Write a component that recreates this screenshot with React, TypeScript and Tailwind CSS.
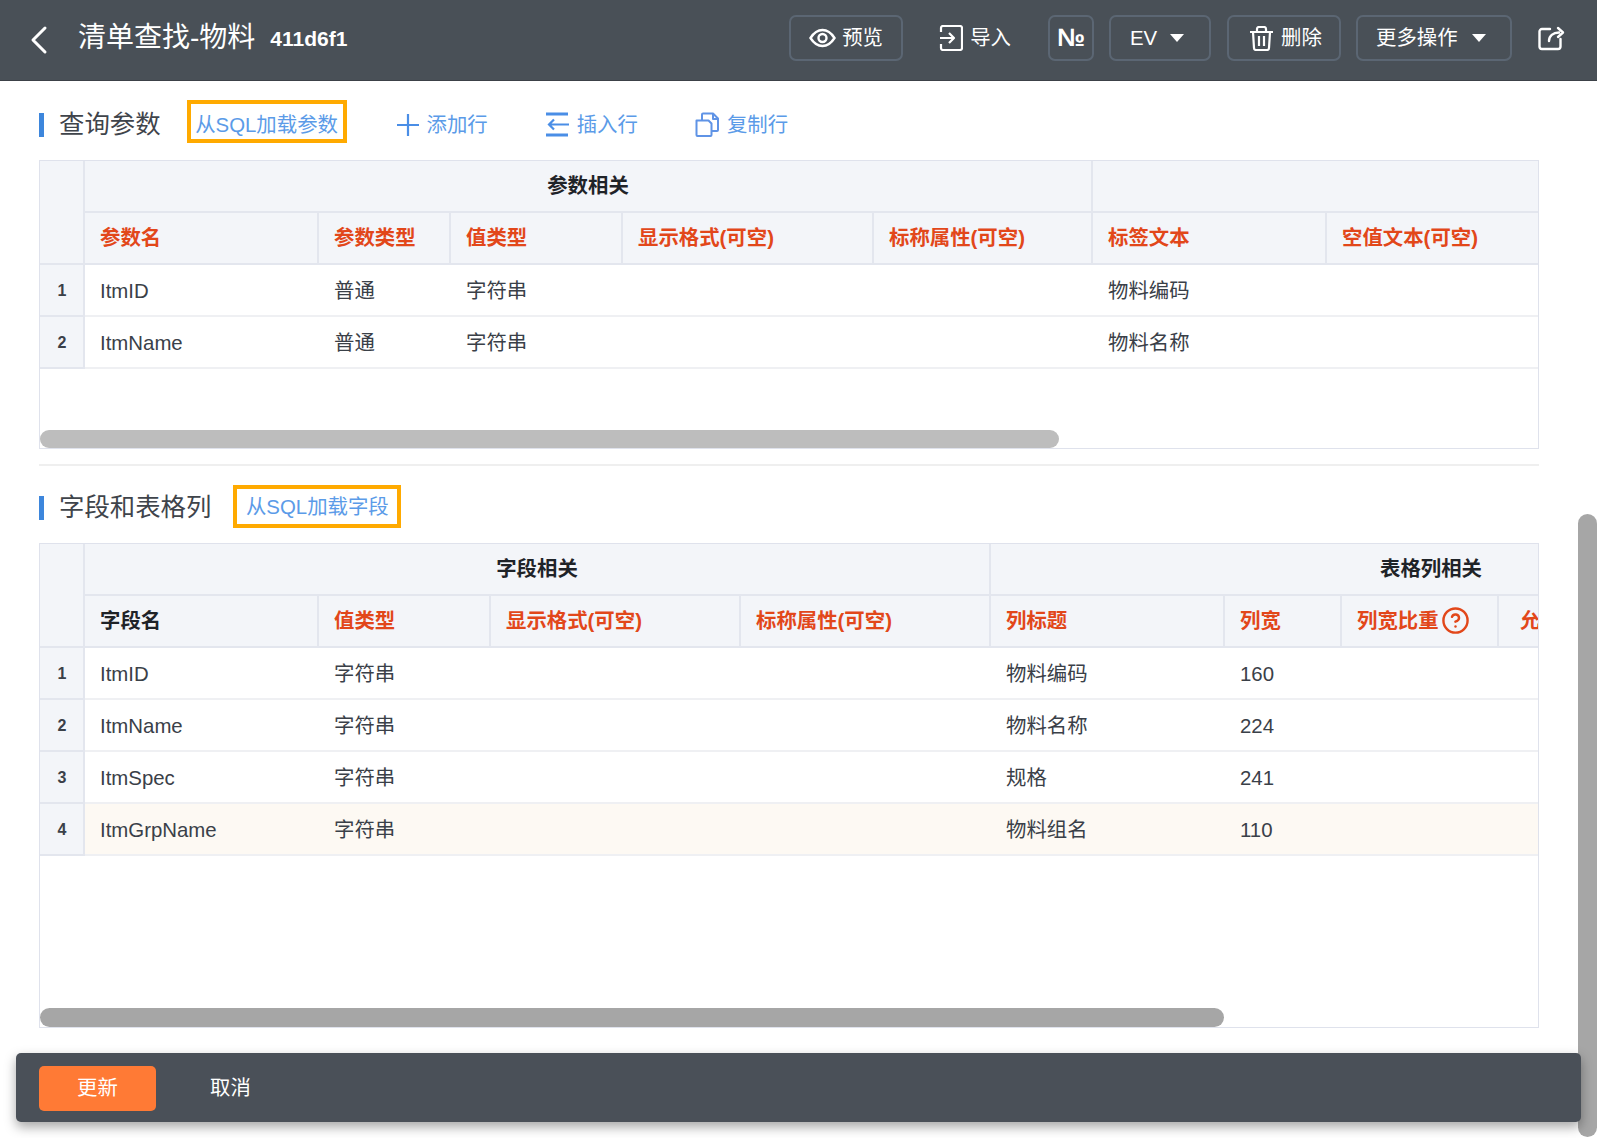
import React from "react";
import { CircleHelp } from "lucide-react";

const Back = () => (
  <svg width="18" height="30" viewBox="0 0 18 30" fill="none" stroke="#fff" strokeWidth="3" strokeLinecap="round" strokeLinejoin="round">
    <path d="M15 3 3 15l12 12" />
  </svg>
);
const EyeI = () => (
  <svg width="27" height="20" viewBox="0 0 27 20" fill="none" stroke="#fff" strokeWidth="2.4">
    <path d="M1.5 10C5 4.5 9 2 13.5 2s8.500 2.500 12 8c-3.500 5.500-7.500 8-12 8s-8.500-2.500-12-8Z" />
    <circle cx="13.500" cy="10" r="4" />
  </svg>
);
const ImportI = () => (
  <svg width="24" height="26" viewBox="0 0 24 26" fill="none" stroke="#fff" strokeWidth="2.200" strokeLinejoin="round">
    <path d="M2 7V3a2 2 0 0 1 2-2h17a2 2 0 0 1 2 2v20a2 2 0 0 1-2 2H4a2 2 0 0 1-2-2v-4" />
    <path d="M1 13h14M10 8l5 5-5 5" />
  </svg>
);
const TrashI = () => (
  <svg width="25" height="25" viewBox="0 0 25 25" fill="none" stroke="#fff" strokeWidth="2.200" strokeLinejoin="round">
    <path d="M1 6h23M8 5V3a2 2 0 0 1 2-2h5a2 2 0 0 1 2 2v2" />
    <path d="M4 6l1 16a2 2 0 0 0 2 2h11a2 2 0 0 0 2-2l1-16M10 10v10M15 10v10" />
  </svg>
);
const ShareI = () => (
  <svg width="27" height="25" viewBox="0 0 27 25" fill="none" stroke="#fff" strokeWidth="2.400" strokeLinecap="round" strokeLinejoin="round">
    <path d="M12 3H4a2.500 2.500 0 0 0-2.500 2.500v15A2.500 2.500 0 0 0 4 23h16a2.500 2.500 0 0 0 2.500-2.500V13" />
    <path d="M11 15c0-5 4-8.500 10-8.500M20 2l5 4.500-5 4.500" />
  </svg>
);
const PlusI = () => (
  <svg width="22" height="22" viewBox="0 0 22 22" fill="none" stroke="#4a8ee6" strokeWidth="2.200" className="mr-[1px]">
    <path d="M0 11h22M11 0v22" />
  </svg>
);
const InsertI = () => (
  <svg width="25" height="25" viewBox="0 0 25 25" fill="none" stroke="#4a8ee6" strokeWidth="2.200">
    <path d="M1 2h22M1 23h22" strokeWidth="2.800" />
    <path d="M4 12.500h20M9 7.500l-5 5 5 5" />
  </svg>
);
const CopyI = () => (
  <svg width="25" height="25" viewBox="0 0 25 25" fill="none" stroke="#5f93e6" strokeWidth="2" strokeLinejoin="round">
    <path d="M1.500 8.500h12l3 3v11.500a1 1 0 0 1-1 1h-13a1 1 0 0 1-1-1Z" />
    <path d="M7 8V2.500a1 1 0 0 1 1-1h10l5 5V18a1 1 0 0 1-1 1h-5" />
    <path d="M18 2v5h5" />
  </svg>
);
const Caret = () => <span className="w-0 h-0 border-x-[7px] border-x-transparent border-t-[8px] border-t-white" />;

const bordered = "flex items-center h-[46px] border-2 border-[#5b6673] rounded-[7px] text-white text-[20.4px]";

function Header() {
  return (
    <header className="flex items-center h-[81px] pb-[4px] bg-[#495057] border-b border-[#3c4148]">
      <div className="ml-[30px] flex mt-[4px]"><Back /></div>
      <h1 className="ml-[30px] text-[28px] text-white leading-none">清单查找-物料</h1>
      <span className="ml-[15px] text-[21px] text-white leading-none font-bold">411d6f1</span>
      <div className="ml-auto mr-[32px] flex items-center">
        <button className={`${bordered} w-[114px] pl-[18px] gap-[6px]`}><EyeI /><span>预览</span></button>
        <button className="ml-[36px] flex items-center gap-[7px] text-white text-[20.4px]"><ImportI /><span>导入</span></button>
        <button className={`${bordered} ml-[37px] w-[46px] justify-center font-bold text-[25px]`}>№</button>
        <button className={`${bordered} ml-[15px] w-[102px] pl-[19px]`}><span>EV</span><span className="ml-[13px] flex"><Caret /></span></button>
        <button className={`${bordered} ml-[16px] w-[114px] pl-[20px] gap-[7px]`}><TrashI /><span>删除</span></button>
        <button className={`${bordered} ml-[15px] w-[156px] pl-[18px]`}><span>更多操作</span><span className="ml-[14px] flex"><Caret /></span></button>
        <span className="ml-[26px] flex"><ShareI /></span>
      </div>
    </header>
  );
}

function SectionTitle({ title, load, box, row, children }: { title: string; load: string; box: string; row: string; children?: React.ReactNode }) {
  return (
    <div className={`${row} flex items-center h-[43px]`}>
      <span className="w-[5px] h-[24px] bg-[#3d86dc]" />
      <span className="ml-[15px] text-[25.400px] text-[#3f444b] leading-none">{title}</span>
      <span className={`${box} self-start h-[43px] border-4 border-[#ffaa00] flex items-center justify-center text-[20.4px] text-[#5b9be8] whitespace-nowrap`}>{load}</span>
      {children}
    </div>
  );
}

function Tool({ icon, label, cls }: { icon: React.ReactNode; label: string; cls: string }) {
  return (
    <span className={`${cls} flex items-center gap-[7px] text-[20.4px] text-[#5b9be8]`}>
      {icon}
      <span>{label}</span>
    </span>
  );
}

const red = "text-[#e2471a]";
const dark = "text-[#1f2328]";
const thBase = "h-[52px] bg-[#f3f5f9] border-r-2 border-b-2 border-[#e3e6ee] pl-[15px] text-left text-[20.4px] font-bold whitespace-nowrap overflow-hidden";
const tdBase = "h-[52px] border-b-2 border-[#eff0f3] px-[15px] pt-[2px] text-[20.4px] text-[#3a4048] whitespace-nowrap overflow-hidden";
const numCell = "bg-[#f3f5f9] border-r-2 border-b-2 border-[#e3e6ee] pt-[2px] pl-[1px] text-center text-[16px] font-bold text-[#3a4048]";
const groupTh = "h-[52px] bg-[#f3f5f9] border-r-2 border-b-2 border-[#e3e6ee] pt-[1px] text-center text-[20.4px] font-bold text-[#1f2328]";

function ParamTable() {
  const rows = [
    ["ItmID", "普通", "字符串", "物料编码"],
    ["ItmName", "普通", "字符串", "物料名称"],
  ];
  const heads = ["参数名", "参数类型", "值类型", "显示格式(可空)", "标称属性(可空)", "标签文本", "空值文本(可空)"];
  return (
    <div className="relative mt-[17px] h-[289px] border border-[#dfe2ec] overflow-hidden">
      <table className="table-fixed border-separate border-spacing-0 w-[1503px]">
        <colgroup>
          {[45, 234, 132, 172, 251, 219, 234, 216].map((w, i) => <col key={i} style={{ width: w }} />)}
        </colgroup>
        <thead>
          <tr>
            <th rowSpan={2} className={numCell} />
            <th colSpan={5} className={groupTh}>参数相关</th>
            <th colSpan={2} className={groupTh} />
          </tr>
          <tr>
            {heads.map((h) => (
              <th key={h} className={`${thBase} ${red}`}>{h}</th>
            ))}
          </tr>
        </thead>
        <tbody>
          {rows.map((r, i) => (
            <tr key={r[0]}>
              <td className={numCell}>{i + 1}</td>
              <td className={tdBase}>{r[0]}</td>
              <td className={tdBase}>{r[1]}</td>
              <td className={tdBase}>{r[2]}</td>
              <td className={tdBase} />
              <td className={tdBase} />
              <td className={tdBase}>{r[3]}</td>
              <td className={tdBase} />
            </tr>
          ))}
        </tbody>
      </table>
      <div className="absolute left-0 bottom-0 h-[18px] w-[1019px] rounded-full bg-[#bdbdbd]" />
    </div>
  );
}

function FieldTable() {
  const rows = [
    ["ItmID", "字符串", "物料编码", "160"],
    ["ItmName", "字符串", "物料名称", "224"],
    ["ItmSpec", "字符串", "规格", "241"],
    ["ItmGrpName", "字符串", "物料组名", "110"],
  ];
  return (
    <div className="relative mt-[15px] h-[485px] border border-[#dfe2ec] overflow-hidden">
      <table className="table-fixed border-separate border-spacing-0 w-[1833px]">
        <colgroup>
          {[45, 234, 172, 250, 250, 234, 117, 157, 374].map((w, i) => <col key={i} style={{ width: w }} />)}
        </colgroup>
        <thead>
          <tr>
            <th rowSpan={2} className={numCell} />
            <th colSpan={4} className={groupTh}>字段相关</th>
            <th colSpan={4} className={groupTh}>表格列相关</th>
          </tr>
          <tr>
            <th className={`${thBase} ${dark}`}>字段名</th>
            <th className={`${thBase} ${red}`}>值类型</th>
            <th className={`${thBase} ${red}`}>显示格式(可空)</th>
            <th className={`${thBase} ${red}`}>标称属性(可空)</th>
            <th className={`${thBase} ${red}`}>列标题</th>
            <th className={`${thBase} ${red}`}>列宽</th>
            <th className={`${thBase} ${red}`}>
              <span className="flex items-center gap-[2px]">列宽比重<CircleHelp size={29} strokeWidth={2} /></span>
            </th>
            <th className={`${thBase} ${red} pl-[21px]`}>允许</th>
          </tr>
        </thead>
        <tbody>
          {rows.map((r, i) => {
            const bg = i === 3 ? "bg-[#fdf9f3]" : "";
            return (
              <tr key={r[0]}>
                <td className={numCell}>{i + 1}</td>
                <td className={`${tdBase} ${bg}`}>{r[0]}</td>
                <td className={`${tdBase} ${bg}`}>{r[1]}</td>
                <td className={`${tdBase} ${bg}`} />
                <td className={`${tdBase} ${bg}`} />
                <td className={`${tdBase} ${bg}`}>{r[2]}</td>
                <td className={`${tdBase} ${bg}`}>{r[3]}</td>
                <td className={`${tdBase} ${bg}`} />
                <td className={`${tdBase} ${bg}`} />
              </tr>
            );
          })}
        </tbody>
      </table>
      <div className="absolute left-0 bottom-0 h-[19px] w-[1184px] rounded-full bg-[#a6a6a6]" />
    </div>
  );
}

export default function App() {
  return (
    <div className="relative w-[1597px] h-[1138px] overflow-hidden bg-white font-['Liberation_Sans','Noto_Sans_CJK_SC',sans-serif]">
      <Header />
      <main className="w-[1500px] ml-[39px]">
        <div className="pt-[19px]">
          <SectionTitle title="查询参数" load="从SQL加载参数" box="w-[160px] ml-[26px] -mt-[7px] pt-[7px]" row="pt-[7px]">
            <Tool cls="ml-[50px]" icon={<PlusI />} label="添加行" />
            <Tool cls="ml-[57px]" icon={<InsertI />} label="插入行" />
            <Tool cls="ml-[57px]" icon={<CopyI />} label="复制行" />
          </SectionTitle>
          <ParamTable />
        </div>
        <div className="mt-[15px] h-[2px] bg-[#efefef]" />
        <div className="pt-[19px]">
          <SectionTitle title="字段和表格列" load="从SQL加载字段" box="w-[168px] ml-[22px] -mt-[3px] pt-[2px]" row="pt-[3px]" />
          <FieldTable />
        </div>
      </main>
      <div className="absolute right-0 top-[514px] bottom-[1px] w-[19px] rounded-full bg-[#a6a6a6]" />
      <footer className="absolute left-[16px] top-[1053px] w-[1565px] h-[69px] rounded-[5px] bg-[#4a5058] shadow-[0_5px_12px_rgba(0,0,0,0.35)] flex items-center pl-[23px] pt-[1px]">
        <button className="w-[117px] h-[45px] rounded-[5px] bg-[#ff7a35] text-white text-[20.4px]">更新</button>
        <button className="ml-[54px] text-[20.4px] text-white">取消</button>
      </footer>
    </div>
  );
}
